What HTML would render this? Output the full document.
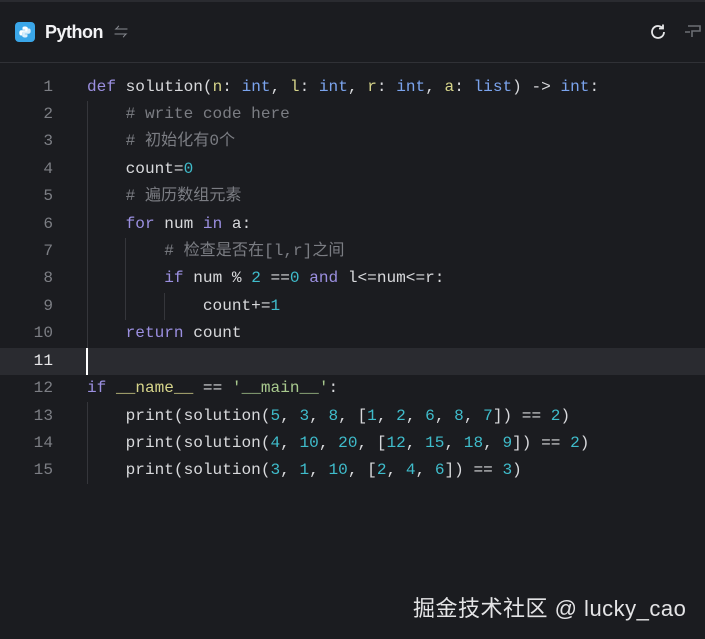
<!DOCTYPE html>
<html><head><meta charset="utf-8"><style>
*{margin:0;padding:0;box-sizing:border-box}
body{width:705px;height:639px;background:#1b1c20;overflow:hidden;position:relative;font-family:"Liberation Sans","Noto Sans CJK SC",sans-serif}
.top{position:absolute;left:0;top:0;width:705px;height:2px;background:#2a2b30}
.hdr{position:absolute;left:0;top:62px;width:705px;height:1px;background:#303136}
.code{position:absolute;left:0;top:73.5px;width:705px;font-family:"Liberation Mono","Noto Sans CJK SC",monospace;font-size:16.1px}
.l{height:27.43px;line-height:27.43px;position:relative;white-space:pre;color:#d8d9dc}
.n{position:absolute;left:0;width:53px;text-align:right;color:#7c7e84}
.t{position:absolute;left:87px}
.cur{background:#2a2b30}
.cur .n{color:#e8e8ea}
.k{color:#9b8fe0}.ty{color:#7ba4ee}.p{color:#d3cf8c}.c{color:#7b7d83}.num{color:#3fbccb}.s{color:#a8c98e}.v{color:#d6d48a}
.g{position:absolute;width:1px;background:#35363b}
</style></head><body>
<div class="top"></div>
<div style="position:absolute;left:15px;top:22px;width:20px;height:20px;border-radius:4px;background:#3aa6e8"></div>
<svg style="position:absolute;left:18px;top:25px" width="14" height="14" viewBox="0 0 14 14"><path d="M7 1.5c-2.5 0-2.5 1-2.5 2v1.3h2.7v.5H3.2c-1.3 0-1.900 1-1.9 2.7s.7 2.5 1.8 2.5h.9V8.6c0-1 .8-1.7 1.8-1.7h2.6c.9 0 1.5-.7 1.5-1.5V3.5c0-1-1-2-2.9-2z" fill="#fff"/><path d="M7 12.5c2.5 0 2.5-1 2.5-2V9.2H6.8v-.5h4c1.3 0 1.9-1 1.9-2.7s-.7-2.5-1.8-2.5H10v1.4c0 1-.8 1.7-1.8 1.7H5.6c-.9 0-1.5.7-1.5 1.5v2.4c0 1 1 2 2.9 2z" fill="#dbeefb"/></svg>
<div style="position:absolute;left:45px;top:22px;font-size:18px;font-weight:bold;color:#f2f2f4;letter-spacing:-0.5px">Python</div>
<div style="position:absolute;left:114px;top:22px;font-size:14px;color:#8a8c92">⇋</div>
<svg style="position:absolute;left:648px;top:22px" width="20" height="20" viewBox="0 0 20 20"><path d="M16 10a6 6 0 1 1-1.9-4.4" fill="none" stroke="#e6e6e8" stroke-width="1.8"/><path d="M15 2.5v4H11" fill="none" stroke="#e6e6e8" stroke-width="1.8"/></svg>
<svg style="position:absolute;left:682px;top:23px" width="23" height="18" viewBox="0 0 23 18"><path d="M6 3h12v5H10v6M3 9h5" fill="none" stroke="#6c6e74" stroke-width="1.6"/></svg>
<div class="hdr"></div>
<div class="g" style="left:87px;top:101px;height:247px"></div>
<div class="g" style="left:125px;top:238px;height:82px"></div>
<div class="g" style="left:164px;top:293px;height:27px"></div>
<div class="g" style="left:87px;top:402px;height:82px"></div>
<div class="code">
<div class="l"><span class="n">1</span><span class="t"><span class="k">def</span> solution(<span class="v">n</span>: <span class="ty">int</span>, <span class="v">l</span>: <span class="ty">int</span>, <span class="v">r</span>: <span class="ty">int</span>, <span class="v">a</span>: <span class="ty">list</span>) -&gt; <span class="ty">int</span>:</span></div>
<div class="l"><span class="n">2</span><span class="t c">    # write code here</span></div>
<div class="l"><span class="n">3</span><span class="t c">    # 初始化有0个</span></div>
<div class="l"><span class="n">4</span><span class="t">    count=<span class="num">0</span></span></div>
<div class="l"><span class="n">5</span><span class="t c">    # 遍历数组元素</span></div>
<div class="l"><span class="n">6</span><span class="t">    <span class="k">for</span> num <span class="k">in</span> a:</span></div>
<div class="l"><span class="n">7</span><span class="t c">        # 检查是否在[l,r]之间</span></div>
<div class="l"><span class="n">8</span><span class="t">        <span class="k">if</span> num % <span class="num">2</span> ==<span class="num">0</span> <span class="k">and</span> l&lt;=num&lt;=r:</span></div>
<div class="l"><span class="n">9</span><span class="t">            count+=<span class="num">1</span></span></div>
<div class="l"><span class="n">10</span><span class="t">    <span class="k">return</span> count</span></div>
<div class="l cur"><span class="n">11</span><span class="t" style="width:2px;height:27px;background:#fff;left:86px"></span></div>
<div class="l"><span class="n">12</span><span class="t"><span class="k">if</span> <span class="v">__name__</span> == <span class="s">'__main__'</span>:</span></div>
<div class="l"><span class="n">13</span><span class="t">    print(solution(<span class="num">5</span>, <span class="num">3</span>, <span class="num">8</span>, [<span class="num">1</span>, <span class="num">2</span>, <span class="num">6</span>, <span class="num">8</span>, <span class="num">7</span>]) == <span class="num">2</span>)</span></div>
<div class="l"><span class="n">14</span><span class="t">    print(solution(<span class="num">4</span>, <span class="num">10</span>, <span class="num">20</span>, [<span class="num">12</span>, <span class="num">15</span>, <span class="num">18</span>, <span class="num">9</span>]) == <span class="num">2</span>)</span></div>
<div class="l"><span class="n">15</span><span class="t">    print(solution(<span class="num">3</span>, <span class="num">1</span>, <span class="num">10</span>, [<span class="num">2</span>, <span class="num">4</span>, <span class="num">6</span>]) == <span class="num">3</span>)</span></div>
</div>
<div style="position:absolute;left:413px;top:591px;font-size:22px;letter-spacing:0.5px;color:#e4e4e6;white-space:nowrap">掘金技术社区 @ lucky_cao</div>
</body></html>
